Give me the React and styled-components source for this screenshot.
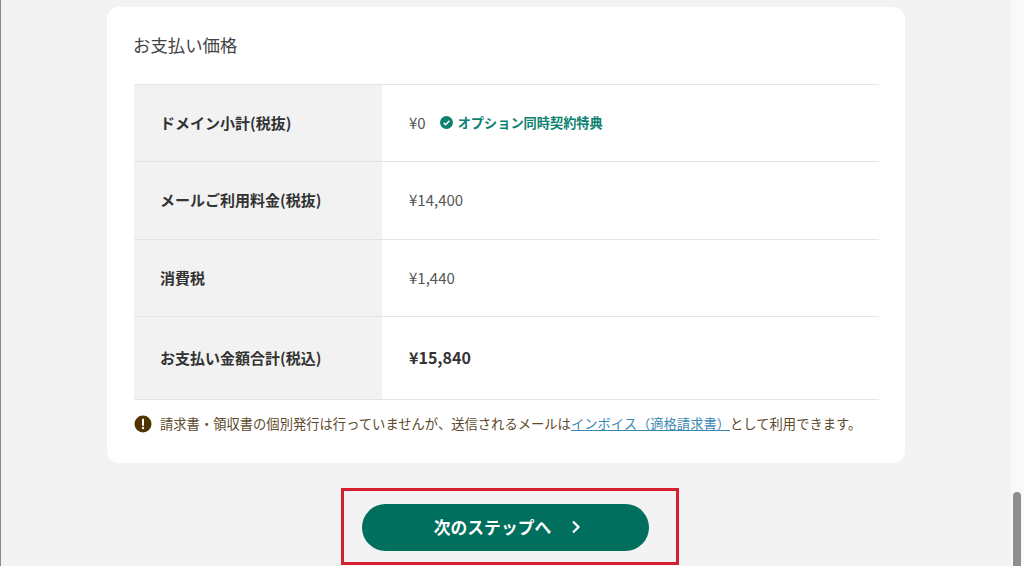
import styled, { createGlobalStyle } from "styled-components";

const FONT = `"Noto Sans CJK JP", "Noto Sans", sans-serif`;
const GREEN = "#006f5d";
const BORDER = "#e4e4e4";

const GlobalStyle = createGlobalStyle`
  html, body {
    margin: 0;
    padding: 0;
    height: 566px;
    overflow: hidden;
    background: #f2f3f2;
    font-family: ${FONT};
  }
`;

const Frame = styled.div`
  display: flex;
  width: 1024px;
  height: 566px;
  overflow: hidden;
  border-left: 1px solid #8a8a8a;
  box-sizing: border-box;
`;
const Main = styled.main`
  flex: 1;
  display: flex;
  flex-direction: column;
  align-items: flex-start;
  padding: 7px 0 0 106px;
`;
const Scrollbar = styled.div`
  width: 13px;
  display: flex;
  flex-direction: column;
  justify-content: flex-end;
  background: #f9f9f9;
  padding-left: 1px;
  box-sizing: border-box;
`;
const ScrollThumb = styled.div`
  width: 8px;
  height: 74px;
  margin-left: 1px;
  border-radius: 4px 4px 0 0;
  background: #8e8e8e;
`;
const Card = styled.section`
  width: 798px;
  height: 456px;
  box-sizing: border-box;
  padding: 26px 26px 0 27px;
  background: #fff;
  border-radius: 12px;
`;
const CardTitle = styled.h2`
  margin: 0 0 26px -1px;
  height: 25px;
  font-size: 17.4px;
  line-height: 24px;
  font-weight: 400;
  color: #444;
`;
const Table = styled.div`
  border-top: 1px solid ${BORDER};
`;
const Row = styled.div`
  display: flex;
  height: ${p => p.$height}px;
  border-bottom: 1px solid ${BORDER};
  box-sizing: border-box;
`;
const Head = styled.div`
  width: 248px;
  display: flex;
  align-items: center;
  padding: 0 0 2px 26px;
  box-sizing: border-box;
  background: #f2f2f2;
  font-size: 15px;
  font-weight: 700;
  color: #333;
`;
const Cell = styled.div`
  flex: 1;
  display: flex;
  align-items: center;
  padding: 0 0 2px 27px;
  font-size: ${p => (p.$strong ? 16 : 15)}px;
  font-weight: ${p => (p.$strong ? 700 : 400)};
  color: ${p => (p.$strong ? "#333" : "#555")};
`;
const Badge = styled.span`
  display: flex;
  align-items: center;
  gap: 5px;
  margin-left: 14px;
  font-size: 13.2px;
  font-weight: 700;
  color: #0b8170;
`;
const Note = styled.p`
  display: flex;
  align-items: center;
  gap: 8px;
  margin: 14px 0 0;
  height: 20px;
  font-size: 13.3px;
  line-height: 20px;
  color: #5c4a2c;
  white-space: nowrap;
`;
const NoteLink = styled.a`
  color: #3c88b5;
  text-decoration: underline;
`;
const ActionBox = styled.div`
  align-self: flex-start;
  margin: 25px 0 0 234px;
  width: 338px;
  height: 77px;
  box-sizing: border-box;
  display: flex;
  align-items: center;
  padding: 2px 0 0 18px;
  border: 3px solid #d5202f;
`;
const NextButton = styled.button`
  width: 287px;
  height: 47px;
  display: flex;
  align-items: center;
  justify-content: center;
  gap: 18px;
  padding: 0 0 2px 6px;
  border: 0;
  border-radius: 24px;
  background: ${GREEN};
  color: #fff;
  font-family: ${FONT};
  font-size: 16.8px;
  font-weight: 700;
`;

const CheckIcon = () => (
  <svg width="13" height="13" viewBox="0 0 13 13">
    <circle cx="6.5" cy="6.5" r="6.5" fill="#0b8170" />
    <path d="M3.6 6.7l2 2 3.8-4" fill="none" stroke="#fff" strokeWidth="1.6" />
  </svg>
);

const AlertIcon = () => (
  <svg width="18" height="18" viewBox="0 0 18 18">
    <circle cx="9" cy="9" r="8.5" fill="#4f3300" />
    <path d="M9 4.4v5.6" stroke="#fff" strokeWidth="2" strokeLinecap="round" />
    <circle cx="9" cy="13" r="1.2" fill="#fff" />
  </svg>
);

const ChevronIcon = () => (
  <svg width="14" height="16" viewBox="0 0 14 16">
    <path d="M4 2.5l5.5 5.5-5.5 5.5" fill="none" stroke="#fff" strokeWidth="2.2" />
  </svg>
);

export default function App() {
  return (
    <>
      <GlobalStyle />
      <Frame>
        <Main>
          <Card>
            <CardTitle>お支払い価格</CardTitle>
            <Table>
              <Row $height={77}>
                <Head>ドメイン小計(税抜)</Head>
                <Cell>
                  ¥0
                  <Badge>
                    <CheckIcon />
                    オプション同時契約特典
                  </Badge>
                </Cell>
              </Row>
              <Row $height={78}>
                <Head>メールご利用料金(税抜)</Head>
                <Cell>¥14,400</Cell>
              </Row>
              <Row $height={77}>
                <Head>消費税</Head>
                <Cell>¥1,440</Cell>
              </Row>
              <Row $height={83}>
                <Head>お支払い金額合計(税込)</Head>
                <Cell $strong>¥15,840</Cell>
              </Row>
            </Table>
            <Note>
              <AlertIcon />
              <span>
                請求書・領収書の個別発行は行っていませんが、送信されるメールは
                <NoteLink>インボイス（適格請求書）</NoteLink>
                として利用できます。
              </span>
            </Note>
          </Card>
          <ActionBox>
            <NextButton>
              次のステップへ
              <ChevronIcon />
            </NextButton>
          </ActionBox>
        </Main>
        <Scrollbar>
          <ScrollThumb />
        </Scrollbar>
      </Frame>
    </>
  );
}
